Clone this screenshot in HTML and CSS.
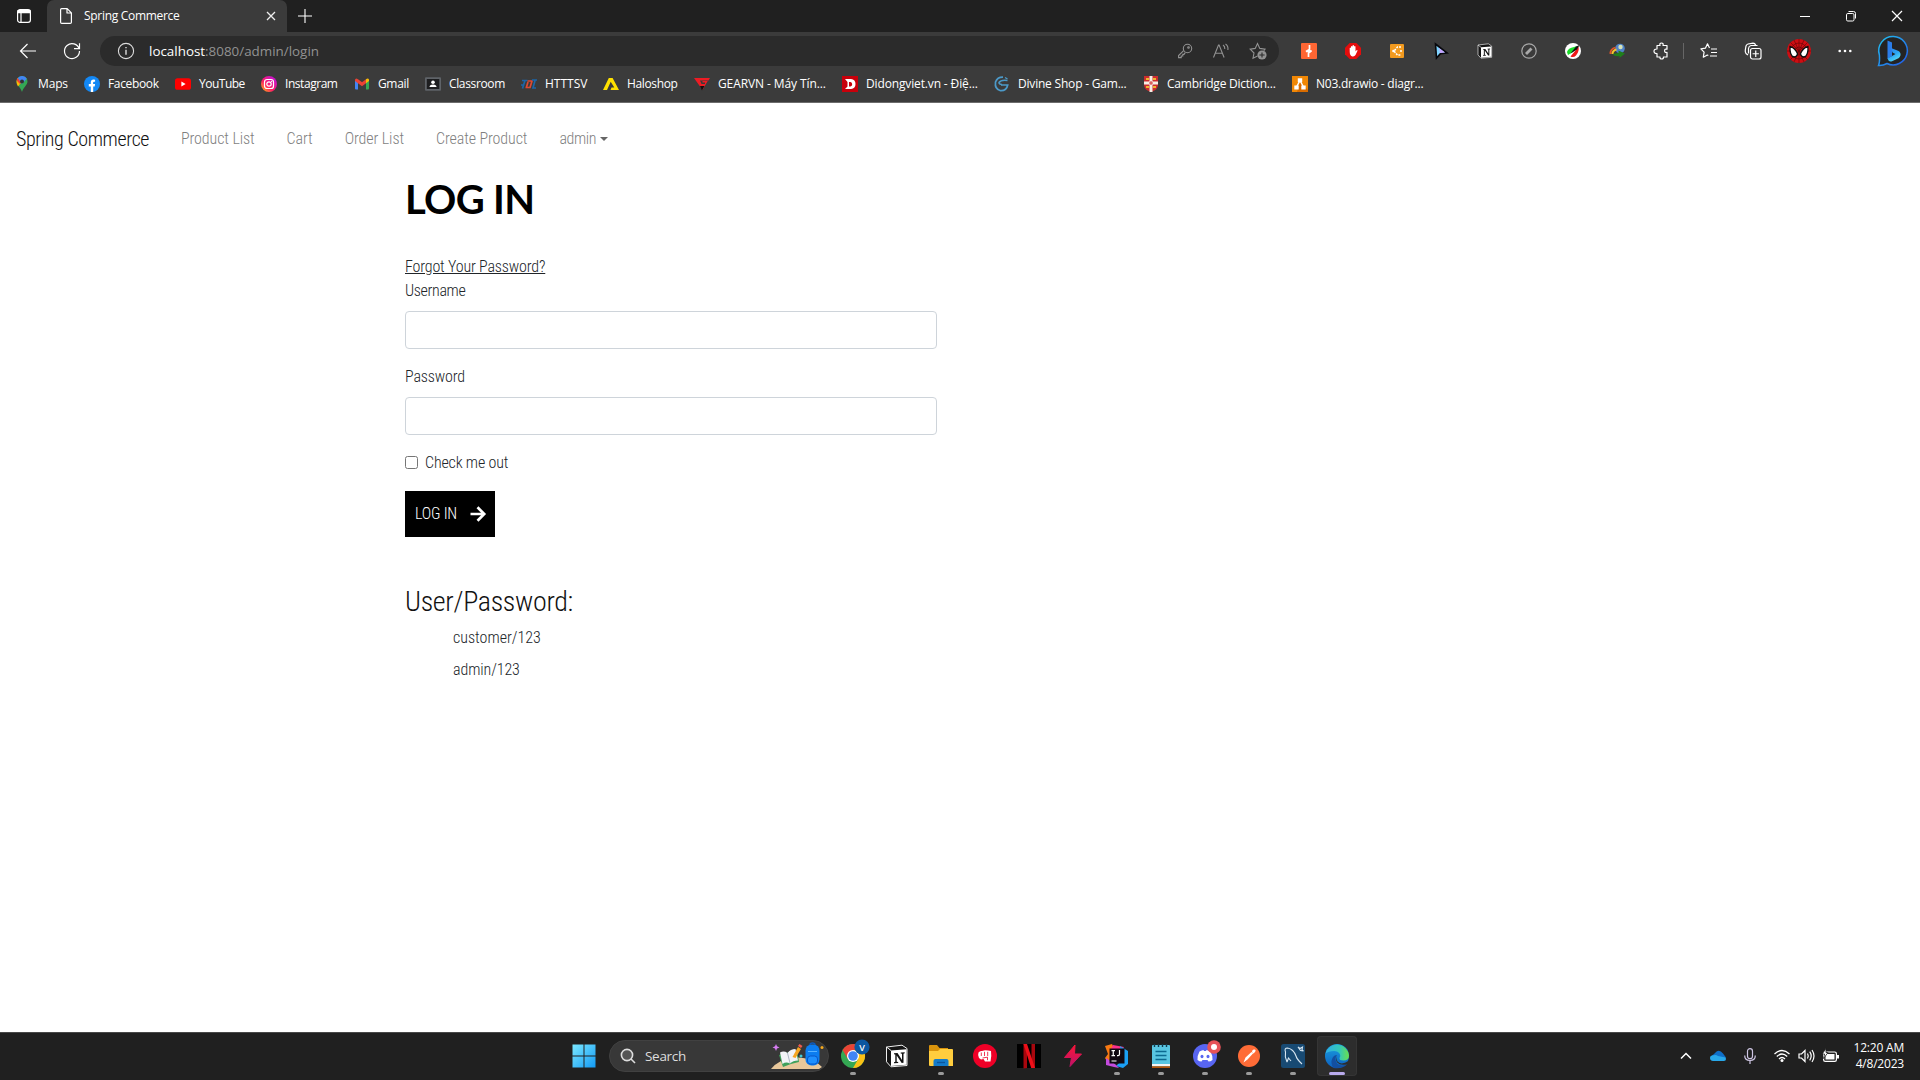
FILE: index.html
```
<!DOCTYPE html>
<html lang="en">
<head>
<meta charset="utf-8">
<title>Spring Commerce</title>
<link rel="stylesheet" href="styles.css">
</head>
<body>
<div class="screen">
<header class="browser">
  <div class="tabbar">
    <div class="tab-menu"><svg width="16" height="16" viewBox="0 0 16 16" fill="none" stroke="#fff" stroke-width="1.2"><rect x="1.6" y="1.6" width="12.8" height="12.8" rx="2.4"/><path d="M2 2.6h12v2H2z" fill="#fff"/><path d="M5 5v9"/></svg></div>
    <div class="tab">
      <svg width="14" height="18" viewBox="0 0 14 18" fill="none" stroke="#fff" stroke-width="1.2" stroke-linejoin="round"><path d="M2.6 1.6h5.6l4.2 4.2v9.4q0 1.2-1.2 1.2H2.8q-1.2 0-1.2-1.2V2.8q0-1.2 1-1.2zM8 1.8V6h4.2"/></svg>
      <span class="tab-title">Spring Commerce</span>
      <svg width="10" height="10" viewBox="0 0 10 10" stroke="#eee" stroke-width="1.3"><path d="M1 1l8 8M9 1L1 9"/></svg>
    </div>
    <svg class="new-tab" width="16" height="16" viewBox="0 0 16 16" stroke="#fff" stroke-width="1.1"><path d="M8 1v14M1 8h14"/></svg>
    <div class="window-controls">
      <span><svg width="12" height="12" viewBox="0 0 12 12" stroke="#fff"><path d="M1 6.5h10"/></svg></span>
      <span><svg width="12" height="12" viewBox="0 0 12 12" stroke="#fff" fill="none"><rect x="1.5" y="3.5" width="7.5" height="7.5" rx="1.3"/><path d="M3.5 1.5h5q2 0 2 2v5"/></svg></span>
      <span><svg width="12" height="12" viewBox="0 0 12 12" stroke="#fff" stroke-width="1.2"><path d="M1 1l10 10M11 1L1 11"/></svg></span>
    </div>
  </div>
  <div class="toolbar">
    <svg class="back" width="18" height="16" viewBox="0 0 18 16" fill="none" stroke="#fff" stroke-width="1.2"><path d="M17 8H1.5M8.5 1L1.5 8l7 7"/></svg>
    <svg class="reload" width="18" height="18" viewBox="0 0 18 18" fill="none" stroke="#fff" stroke-width="1.2"><path d="M16.2 7A7.5 7.5 0 1 0 16.5 9M16.5 1.2v5.5H11"/></svg>
    <div class="address">
      <svg width="18" height="18" viewBox="0 0 18 18" fill="none" stroke="#ddd" stroke-width="1.1"><circle cx="9" cy="9" r="7.6"/><path d="M9 7.8v5M9 4.9v1.4" stroke-width="1.4"/></svg>
      <span class="url"><b>localhost</b>:8080/admin/login</span>
      <div class="address-actions">
        <svg width="16" height="16" viewBox="0 0 16 16" fill="none" stroke="#929292" stroke-width="1.1"><circle cx="10.5" cy="5.5" r="4.2"/><circle cx="11.5" cy="4.5" r=".8"/><path d="M6.6 7.6L1.6 12.6v2h2.6v-1.6h1.6v-1.6h1.2l1.2-1.8"/></svg>
        <svg width="18" height="16" viewBox="0 0 18 16" fill="none" stroke="#929292" stroke-width="1.1"><path d="M1.5 14.5L6.5 2h.6l5 12.5M3.3 10.2h7M11 2q2 1.2 1.8 4M13.5 1q3 2 2.4 6"/></svg>
        <svg width="18" height="18" viewBox="0 0 18 18" fill="none" stroke="#929292" stroke-width="1.1"><path d="M8.5 14L4 16.2 5 11 1.2 7.2l5-.8L8.5 1.6l2.3 4.8 5.2.8-1.2 1.4"/><circle cx="13" cy="13" r="4.6" fill="#929292" stroke="none"/><path d="M13 10.4v5.2M10.4 13h5.2" stroke="#2b2b2b"/></svg>
      </div>
    </div>
    <div class="extensions">
      <span><svg width="16" height="16" viewBox="0 0 16 16"><rect width="16" height="16" rx="1" fill="#ff6633"/><path d="M8.500 2v4.500L5 8.500l5.500-.7L7.500 10v4" fill="none" stroke="#fff" stroke-width="1.700" stroke-linejoin="bevel"/></svg></span>
      <span><svg width="16" height="16" viewBox="0 0 16 16"><path d="M4.700 0h6.600L16 4.700v6.600L11.300 16H4.700L0 11.300V4.700z" fill="#e40d0d"/><path d="M4.700 8.500V5q.7-1 1.300 0V3.400q.8-1 1.500 0v-.8q.8-1 1.500 0v1q.8-1 1.500 0v5l1-1.400q1-.5 1 .5L10.500 12q-1 1.700-3 1.400-2.800-.4-2.800-4.900z" fill="#fff"/></svg></span>
      <span><svg width="14" height="14" viewBox="0 0 14 14"><rect width="14" height="14" rx="1" fill="#f29a1f"/><path d="M11 3H7.500L4 7l3.500 4H11" fill="none" stroke="#fff" stroke-width="1.500" stroke-dasharray="2 1"/><circle cx="3.500" cy="7" r="1.300" fill="#fff"/><circle cx="11" cy="7" r="1" fill="#fff"/></svg></span>
      <span><svg width="14" height="16" viewBox="0 0 14 16"><path d="M1.500 1l11.500 9-6.500.6L2.500 15z" fill="#80d5ff" stroke="#08080c" stroke-width="1.600"/><path d="M5 5l6 4.600-5 .4z" fill="#c7a4ff"/></svg></span>
      <span><svg width="16" height="16" viewBox="0 0 24 24"><use href="#notion"/></svg></span>
      <span><svg width="16" height="16" viewBox="0 0 16 16" fill="none" stroke="#aaa" stroke-width="1.200"><circle cx="8" cy="8" r="7.200"/><path d="M5 11l5.500-5.500" stroke-width="2.800"/></svg></span>
      <span><svg width="16" height="16" viewBox="0 0 16 16"><circle cx="8" cy="8" r="8" fill="#fff"/><path d="M2 9q1-4 7-5l3-1-4 6-5 3z" fill="#1bdc2a"/><path d="M5.500 13.500l5-6 3-4q1 5-2.500 9-2.500 2.500-5.500 1z" fill="#f01818"/><path d="M5.500 10.500l5.500-7L14.500 2l-2.500 4.500z" fill="#111"/></svg></span>
      <span><svg width="16" height="16" viewBox="0 0 16 16"><circle cx="11" cy="5.500" r="4.800" fill="#4f83c8"/><circle cx="11.500" cy="4" r="2.200" fill="#d6e4b8"/><path d="M1.500 11q-.5-5 5-6.500" stroke="#e2552a" stroke-width="1.800" fill="none"/><path d="M3.500 11q0-3.500 4-4.500" stroke="#f3c52c" stroke-width="2" fill="none"/><path d="M3.500 11l6-1V7.500l6.500 3-5.500 4.500v-2q-5 .8-7-2z" fill="#1f7f1b"/></svg></span>
      <span><svg width="16" height="18" viewBox="0 0 16 18" fill="none" stroke="#fff" stroke-width="1.200" stroke-linejoin="round"><path d="M4 3.500h3q-.7-2.500 1.500-2.500T10 3.500h4v3.700q-2.400-.5-2.400 1.600t2.400 1.600V15h-3.600q.3 2-1.700 2t-1.700-2H4v-3.500q-3 .2-3-2.200T4 7z"/></svg></span>
    </div>
    <i class="divider"></i>
    <div class="tools">
      <span><svg width="18" height="18" viewBox="0 0 18 18" fill="none" stroke="#fff" stroke-width="1.200" stroke-linejoin="round"><path d="M9.500 6L7.500 1.800 5.400 6.200l-4.500.7 3.200 3.300-.8 5 4-2.200 1 .5M11 7h6M11 10.500h6M10 14h7"/></svg></span>
      <span><svg width="18" height="18" viewBox="0 0 18 18" fill="none" stroke="#fff" stroke-width="1.200"><path d="M4 13L2 11.500Q1 10 1.300 8L2 4Q2.500 2.500 4 2l5-.8q2 0 2.700 2"/><path d="M4.500 11.500V6.500q.2-2.500 2.500-3h6.500"/><rect x="6.500" y="6.500" width="10.500" height="10.500" rx="2" fill="#3b3b3b"/><path d="M11.750 8.600v6.300M8.600 11.750h6.300"/></svg></span>
      <span class="avatar"><svg width="24" height="24" viewBox="0 0 24 24"><circle cx="12" cy="12" r="12" fill="#cf0d12"/><g fill="none" stroke="#5e0609" stroke-width=".6"><path d="M12 0v24M0 12h24M3.500 3.500l17 17M20.500 3.500l-17 17M7 1l10 22M17 1L7 23"/><circle cx="12" cy="12" r="4"/><circle cx="12" cy="12" r="8"/></g><path d="M3 7.500q5 1 7.600 7.500-1 3-3.600 3-4.500-1-4-10.500zM21 7.500q-5 1-7.600 7.500 1 3 3.600 3 4.500-1 4-10.500z" fill="#fff" stroke="#111" stroke-width="1.300"/></svg></span>
      <span><svg width="14" height="4" viewBox="0 0 14 4" fill="#fff"><circle cx="1.700" cy="2" r="1.300"/><circle cx="7" cy="2" r="1.300"/><circle cx="12.300" cy="2" r="1.300"/></svg></span>
      <span><svg width="32" height="32" viewBox="0 0 32 32"><defs><linearGradient id="ring" x1="0" y1="0" x2="1" y2="1"><stop offset="0" stop-color="#23c2ef"/><stop offset="1" stop-color="#2257e7"/></linearGradient><linearGradient id="bee" x1="0" y1="0" x2=".6" y2="1"><stop offset="0" stop-color="#2f7dea"/><stop offset=".55" stop-color="#2aa4f4"/><stop offset="1" stop-color="#56dcf5"/></linearGradient></defs><path d="M16.500 1.500a14.200 14.200 0 1 1-6.500 27Q6 30.800 1.500 30.500 3 27 2.400 20A14.200 14.200 0 0 1 16.500 1.500z" fill="#242424" stroke="url(#ring)" stroke-width="1.500"/><path d="M10.500 5.500l4.500 2v13.500l-4.500 3z" fill="#2b7de9"/><path d="M10.500 23.500l4.500-2.500 3.500-2-3-1.500-1.500-4.500 7 2.700q3 1.500 2.500 4.500-.5 2-2 3l-6.500 3q-3.500 1-4.500-2.700z" fill="url(#bee)"/></svg></span>
    </div>
  </div>
  <nav class="bookmarks">
    <a class="bm-maps"><svg width="16" height="16" viewBox="0 0 16 16"><path d="M8 0a5.500 5.500 0 0 0-5.500 5.500C2.500 9 6.500 11 8 16c1.500-5 5.500-7 5.500-10.500A5.500 5.500 0 0 0 8 0z" fill="#34a853"/><path d="M3.800 2L8 5.500l-4 5Q2.500 8.500 2.500 5.500 2.600 3.500 3.800 2z" fill="#fbbc04"/><path d="M3.800 2.100L8 5.500 6 8 2.600 4.500q.3-1.500 1.200-2.400z" fill="#ea4335"/><path d="M3.800 2A5.500 5.500 0 0 1 12.800 2.800L8 8z" fill="#4285f4"/><circle cx="8" cy="5.500" r="2" fill="#333"/></svg><span>Maps</span></a>
    <a class="bm-facebook"><svg width="16" height="16" viewBox="0 0 16 16"><circle cx="8" cy="8" r="8" fill="#1388f5"/><path d="M6.800 16v-5.600h-2V8h2V6.300Q6.900 3.500 9.500 3.500l1.600.2v2h-1q-1 0-1 1V8h2l-.4 2.400H9.200V16z" fill="#fff"/></svg><span>Facebook</span></a>
    <a class="bm-youtube"><svg width="16" height="16" viewBox="0 0 16 16"><rect y="2.300" width="16" height="11.500" rx="2.600" fill="#f00"/><path d="M6.400 5.500l4.200 2.500-4.200 2.500z" fill="#fff"/></svg><span>YouTube</span></a>
    <a class="bm-instagram"><svg width="16" height="16" viewBox="0 0 16 16"><defs><linearGradient id="insta" x1="0" y1="1" x2="1" y2="0"><stop offset="0" stop-color="#ffc60a"/><stop offset=".4" stop-color="#ff1f63"/><stop offset="1" stop-color="#b40cf0"/></linearGradient></defs><circle cx="8" cy="8" r="8" fill="url(#insta)"/><g fill="none" stroke="#fff" stroke-width="1.200"><rect x="3.500" y="3.500" width="9" height="9" rx="2.600"/><circle cx="8" cy="8" r="2.200"/></g><circle cx="10.600" cy="5.400" r=".6" fill="#fff"/></svg><span>Instagram</span></a>
    <a class="bm-gmail"><svg width="16" height="16" viewBox="0 0 16 16"><path d="M1 4h3v9.500H2q-1 0-1-1z" fill="#4285f4"/><path d="M12 4h3v8.500q0 1-1 1h-2z" fill="#34a853"/><path d="M1 5V4q0-1.500 1.500-1.500L4 3.300l4 3 4-3v4L8 10.200 4 7.300z" fill="#ea4335"/><path d="M12 7.300v-4q2-1.600 3 .2v1.500z" fill="#fbbc04"/></svg><span>Gmail</span></a>
    <a class="bm-classroom"><svg width="16" height="16" viewBox="0 0 16 16"><rect y="1.300" width="16" height="13.500" rx="1" fill="#5f6368"/><path d="M1.800 3h12.500v10H1.800z" fill="#1d1e20"/><circle cx="8" cy="6.200" r="1.800" fill="#fff"/><path d="M4.500 11q0-2.500 3.500-2.500t3.500 2.500z" fill="#fff"/></svg><span>Classroom</span></a>
    <a class="bm-httt"><svg width="16" height="16" viewBox="0 0 16 16" fill="none" stroke-width="1.700"><path d="M1 4.500h5.500M4 4.500L1.500 12.500M0 9h3" stroke="#1c66a8"/><path d="M6.500 5h4.500L9 11.500H4.500M7 6l-1.500 5" stroke="#df4a32"/><path d="M11 4h5M14 4.500L12 12h3" stroke="#1c66a8"/></svg><span>HTTTSV</span></a>
    <a class="bm-halo"><svg width="16" height="16" viewBox="0 0 16 16"><path d="M5.800 2h3.800L16 14H7.500l1-2.500h2.800L7.700 5.800 4 14H0z" fill="#ffe100"/></svg><span>Haloshop</span></a>
    <a class="bm-gear"><svg width="16" height="16" viewBox="0 0 16 16"><path d="M0 2h16l-1.500 2.500H6L7.500 8h3.500V6.500H8.500V5h5.200L8.500 14z" fill="#ed1c24"/><path d="M6 10h4.500L8 14.500z" fill="#111"/></svg><span>GEARVN - Máy Tín...</span></a>
    <a class="bm-didong"><svg width="16" height="16" viewBox="0 0 16 16"><rect width="16" height="16" fill="#c8000b"/><path d="M3 3h6q4.500.5 4.500 5t-4.500 5H3l2.500-2.500V6zM7 6v4.500h1.500q1.700-.3 1.700-2.300T8.500 6z" fill="#fff" fill-rule="evenodd"/></svg><span>Didongviet.vn - Điệ...</span></a>
    <a class="bm-divine"><svg width="16" height="16" viewBox="0 0 16 16" fill="none" stroke="#4c9ac9" stroke-width="1.700"><path d="M9 1.200Q3.500 1 1.500 6q-1 7 5 8.700 6 .3 7.200-5.700H7"/><path d="M13.500 4.500Q7 3.500 5 6.500q0 2 3 2" stroke-width="1.500"/><path d="M11 1.500l2.500 1.500" stroke-width="1.300"/></svg><span>Divine Shop - Gam...</span></a>
    <a class="bm-camb"><svg width="16" height="16" viewBox="0 0 16 16"><path d="M1 0h14v9q0 5-7 7-7-2-7-7z" fill="#cb2c2e"/><path d="M3 2h3v2H3zM10 2h3v2h-3zM3 10h3v2H3zM10 10h3v2h-3z" fill="#efb52d"/><path d="M6.500 0h3v5.500H15v3H9.500V16h-3V8.500H1v-3h5.500z" fill="#f6eee6"/><path d="M8 5v4M6 7h4" stroke="#c33"/></svg><span>Cambridge Diction...</span></a>
    <a class="bm-drawio"><svg width="16" height="16" viewBox="0 0 16 16"><rect width="16" height="16" fill="#f08705"/><path d="M8 6l8 8v2H5z" fill="#d96c00"/><path d="M8 4.500L4.500 11M8 4.500l3.500 6.500" stroke="#fff" stroke-width="1.500"/><path d="M5.800 2.300h4.400v4H5.800zM2.300 9.500h4.400v4H2.300zM9.300 9.500h4.400v4H9.300z" fill="#fff"/></svg><span>N03.drawio - diagr...</span></a>
  </nav>
</header>

<main class="page">
  <nav class="navbar">
    <a class="brand">Spring Commerce</a>
    <a>Product List</a><a>Cart</a><a>Order List</a><a>Create Product</a><a class="dropdown">admin</a>
  </nav>
  <section class="login">
    <h1>LOG IN</h1>
    <a class="forgot">Forgot Your Password?</a>
    <label class="username">Username</label>
    <input type="text">
    <label>Password</label>
    <input type="password">
    <div class="check"><i></i><span>Check me out</span></div>
    <button>LOG IN<svg width="16" height="16" viewBox="0 0 16 16" fill="none" stroke="#fff" stroke-width="2.700"><path d="M.5 8h13.500M7.500 1.300L14.200 8l-6.700 6.700"/></svg></button>
    <h3>User/Password:</h3>
    <ul><li>customer/123</li><li>admin/123</li></ul>
  </section>
</main>

<footer class="taskbar">
  <div class="start"><svg width="24" height="24" viewBox="0 0 24 24"><defs><linearGradient id="win" x1="0" y1="0" x2="1" y2="1"><stop offset="0" stop-color="#7be8ff"/><stop offset="1" stop-color="#129af5"/></linearGradient></defs><path d="M.5.500h11v11H.5zM12.500.5h11v11h-11zM.5 12.500h11v11H.5zM12.500 12.500h11v11h-11z" fill="url(#win)"/></svg></div>
  <div class="search">
    <svg width="16" height="16" viewBox="0 0 16 16" fill="#555" stroke="#ddd" stroke-width="1.600"><circle cx="7" cy="7" r="5.600"/><path d="M11 11l4 4"/></svg>
    <span>Search</span>
    <svg class="doodle" width="54" height="28" viewBox="0 0 54 28"><path d="M1 27q4-5 10-8l12-4 10 1q12 1 19 9l-3 2z" fill="#e8c79a"/><path d="M9 13l3-1 15-4 2 12-8 2-8 3z" fill="#3fa05c"/><path d="M10 10.500q4-2 7.500.5 3-4 8-4l2.500 11.500q-5 0-8 3-4-2-7.500.5z" fill="#f2f4f8"/><path d="M17.500 11l2.500 10" stroke="#aeb7c6" fill="none"/><path d="M22.500 15l5.500-10 3 2-5.500 9z" fill="#f6a623"/><path d="M28 4l1.500-2 3 2-1.500 2z" fill="#ef5a4c"/><rect x="35.500" y="2.500" width="14" height="21" rx="6" fill="#0c7df0"/><path d="M40 3q0-2 2.500-2T45 3" fill="none" stroke="#0c5cc0" stroke-width="1.500"/><rect x="37.500" y="14" width="10" height="8" rx="3" fill="#1e90ff" stroke="#0756c9"/><path d="M38 9.500h9" stroke="#57b2ff"/><path d="M6 2l1 2.300L9.500 5.500 7 6.500 6 9 5 6.500 2.500 5.500 5 4.300z" fill="#d77df2"/><circle cx="52" cy="5.500" r="1.500" fill="#f5a91c"/><circle cx="31" cy="14" r="1.500" fill="#41c8d6"/></svg>
  </div>
  <div class="apps">
    <span class="run"><svg width="32" height="32" viewBox="0 0 32 32"><circle cx="16" cy="16" r="12" fill="#34a853"/><path d="M5.600 10A12 12 0 0 1 26.400 10L16 16z" fill="#ea4335"/><path d="M16 10h10.400A12 12 0 0 1 16 28l5.200-9z" fill="#fbc116"/><path d="M5.600 10l5.200 9L16 10z" fill="#ea4335"/><circle cx="16" cy="16" r="6" fill="#fff"/><circle cx="16" cy="16" r="4.800" fill="#4285f4"/><circle cx="25" cy="7" r="7.600" fill="#0b57a0"/><text x="25" y="10.500" text-anchor="middle" class="badge">V</text></svg></span>
    <span><svg width="24" height="24" viewBox="0 0 24 24"><g id="notion"><path d="M1.500 3L17 1.200l5 3.300v17L6 22.800l-4.500-5z" fill="#151515" stroke="#eee" stroke-width="1"/><path d="M6 6.500l15.500-1.300v15.500L6 22z" fill="#fff"/><path d="M1.500 3L6 6.500" stroke="#eee"/><path d="M9 9.200l3.500-.3 4.500 7V9.800l-1.300-.3v-1l4-.3v1l-1.200.5v9l-1.800.2-5-7.500v6.300l1.500.3v1l-4.200.3v-1l1.300-.5v-7.300L9 10.200z" fill="#111"/></g></svg></span>
    <span class="run"><svg width="26" height="24" viewBox="0 0 26 24"><path d="M1 2q0-1 1-1h7l2.500 3H20v6H1z" fill="#d9930c"/><path d="M1 7h9l2-2h12q1 0 1 1v16H2q-1 0-1-1z" fill="#ffcd3e"/><path d="M5.500 22v-5q0-2 2-2h11q2 0 2 2v5z" fill="#147bc9"/><path d="M9 18.500h8" stroke="#0b559b" stroke-width="1.300"/></svg></span>
    <span><svg width="24" height="24" viewBox="0 0 24 24"><circle cx="12" cy="12" r="12" fill="#ef0027"/><path d="M5.500 8.500Q7 6.500 9 7l3-.8 3 .3 3 .5q.8 5-.5 10.500H12L10.500 15l-2.500.5-2-1.500q-1.500-3-.5-5.500z" fill="#fff"/><path d="M8.300 8.500V12M11.500 7.800V12M14.700 7.800V12M9.500 14l5-.8v3" stroke="#ef0027" stroke-width=".8" fill="none"/></svg></span>
    <span><svg width="24" height="24" viewBox="0 0 24 24"><path d="M0 0h24v24H0z"/><path d="M6.500 0H10v24l-3.500.5zM14.500 0H18v24h-3.500z" fill="#a8070e"/><path d="M6.500 0H10l8 24h-3.800z" fill="#ee1019"/></svg></span>
    <span><svg width="20" height="24" viewBox="0 0 20 24"><defs><linearGradient id="bolt" x1="0" y1="0" x2="0" y2="1"><stop offset="0" stop-color="#fc1539"/><stop offset="1" stop-color="#bd1268"/></linearGradient></defs><path d="M12 1L1.500 13.500h7L7 22.500 18.500 10h-7z" fill="url(#bolt)" stroke="url(#bolt)" stroke-linejoin="round"/></svg></span>
    <span class="run"><svg width="26" height="26" viewBox="0 0 26 26"><path d="M1 3l7-2 3 6-7 13-3-5 3-4z" fill="#f97a12"/><path d="M9 2l11 2-3 5-10-3z" fill="#fc318c"/><path d="M16 3l8 5v13l-5 4-7-2 6-6z" fill="#1b9ff5"/><path d="M2 15l9 6 4 4-5-1-8-2z" fill="#c44bdd"/><path d="M5.500 5.500h15v15h-15z" fill="#100812"/><path d="M7.500 7.700h3.500M9.250 8v4.500M7.500 12.700h3.500M15.500 7v4q0 1.700-1.500 1.700h-1M7.500 18h5" stroke="#fff" stroke-width="1.200" fill="none"/></svg></span>
    <span class="run"><svg width="20" height="24" viewBox="0 0 20 24"><rect x="1" y="1" width="18" height="22.500" rx="1" fill="#59c6e2"/><path d="M1 20h18v2.200H1z" fill="#f4f4f4"/><path d="M1 22.200h18V24H1z" fill="#b3560c"/><path d="M3.500 0v3M7.500 0v3M11.500 0v3M15.500 0v3" stroke="#123c50" stroke-width="1.400"/><path d="M4.500 7.500h11M4.500 11.500h11M4.500 15.500h11" stroke="#0c6a91" stroke-width="1.700" /></svg></span>
    <span class="run"><svg width="32" height="32" viewBox="0 0 32 32"><circle cx="16" cy="16" r="12" fill="#5865f2"/><path d="M10.500 11.500q2.500-1.500 4-1.500l.5 1h2l.5-1q1.500 0 4 1.500 2.300 4 2 8.500-2 1.500-4 1.500l-1-1.500h-5l-1 1.500q-2 0-4-1.500-.300-4.500 2-8.500z" fill="#fff"/><ellipse cx="13" cy="16.500" rx="1.500" ry="1.700" fill="#5865f2"/><ellipse cx="19" cy="16.500" rx="1.500" ry="1.700" fill="#5865f2"/><circle cx="25" cy="7" r="6.800" fill="#e75358"/><circle cx="25" cy="7" r="3" fill="#fff"/></svg></span>
    <span class="run"><svg width="24" height="24" viewBox="0 0 24 24"><circle cx="12" cy="12" r="11" fill="#ff6c37"/><path d="M6.500 18.500l2-5 6-5.500 1.500 1.500-5.500 6zM15 7.500q.5-2.500 2.500-2t.5 2.500-2.300 1.200z" fill="#fff"/></svg></span>
    <span class="run"><svg width="24" height="24" viewBox="0 0 24 24"><rect width="24" height="24" rx="2.500" fill="#184a73"/><path d="M6 18Q3.500 13 4.500 8q-1.500-4 2-4 6 1 8.500 8 1 3.500 6 8M6 18l1.500-4 2.500 3M17 3l2 1.500L21.500 3l-.5 3 1.500 1-3-.5z" fill="none" stroke="#d8e7f2" stroke-width="1.100"/></svg></span>
    <span class="run active"><svg width="24" height="24" viewBox="0 0 24 24"><defs><linearGradient id="edge-top"><stop offset="0" stop-color="#2faee8"/><stop offset=".6" stop-color="#34c8b8"/><stop offset="1" stop-color="#6be04a"/></linearGradient><linearGradient id="edge-low" x1="0" y1="0" x2="0" y2="1"><stop offset="0" stop-color="#1aa0e0"/><stop offset="1" stop-color="#0d60c0"/></linearGradient></defs><circle cx="12" cy="12" r="12" fill="url(#edge-low)"/><path d="M.5 9.500A12 12 0 0 1 24 11.500q0 5-5.500 5-4.500 0-4-2.500 1.500-2 .3-4Q13 7 9 7 3.500 7 .5 9.500z" fill="url(#edge-top)"/><path d="M8.500 24Q5 19 7.500 14 9 11 12 11q-3 4 0 8.500 3.500 3.500 10.500.500Q17 25.500 8.500 24z" fill="#134fa0"/><path d="M12.500 11.500q-2 2.500 0 6 4 4 11-.500l.5 1-2.500 2.200q-6 2-9.500-2-2-3.500.5-6.700z" fill="#2d2d2d"/></svg></span>
  </div>
  <div class="tray">
    <span><svg width="12" height="8" viewBox="0 0 12 8" fill="none" stroke="#fff" stroke-width="1.500"><path d="M1 6.500l5-5 5 5"/></svg></span>
    <span><svg width="16" height="12" viewBox="0 0 16 12"><path d="M3 10Q1 8 2 5.500 4 4 5 3q4-4.500 8 .5l3 4-4 3z" fill="#0f6fc9"/><path d="M3 11q-3-.5-3-3t3.500-2.700Q6 4.500 8 6l5 1q3 0 3 2t-2 2z" fill="#28a8ea"/></svg></span>
    <span><svg width="12" height="16" viewBox="0 0 12 16" fill="none" stroke="#cfc6e4" stroke-width="1.200"><rect x="3.500" y=".700" width="5" height="10" rx="2.500"/><path d="M.700 7.500q0 5 5.300 5t5.300-5M6 12.500V16"/></svg></span>
    <span class="status">
      <svg width="16" height="14" viewBox="0 0 16 14" fill="none" stroke="#fff" stroke-width="1.300"><path d="M.500 5q7.500-7 15 0M2.800 7.500q5.200-5 10.400 0M5 10q3-3 6 0"/><circle cx="8" cy="11.500" r="1.500" fill="#fff" stroke="none"/></svg>
      <svg width="17" height="14" viewBox="0 0 17 14" fill="none" stroke="#fff" stroke-width="1.200"><path d="M1 5h2.500L7 1.500v11L3.500 9H1zM9.500 4.500q1.500 2.500 0 5M11.700 2.700q3 4.300 0 8.600M14 1q4 6 0 12"/></svg>
      <svg width="17" height="14" viewBox="0 0 17 14"><rect x="1.600" y="3" width="12.800" height="9.400" rx="1.700" fill="none" stroke="#fff" stroke-width="1.200"/><path d="M3.500 5h9v5.500h-9zM15 6h2v3.500h-2z" fill="#fff"/><path d="M4-.5L.2 5H2.500L1.500 9.500l4.500-6H4z" fill="#fff" stroke="#202020" stroke-width=".8"/></svg>
    </span>
    <div class="clock"><div>12:20 AM</div><div>4/8/2023</div></div>
  </div>
</footer>
</div>
</body>
</html>
```

FILE: styles.css
```
* { box-sizing: border-box; }
body { margin: 0; background: #fff; overflow: hidden; }
svg { display: block; flex: none; overflow: visible; }
.screen { width: 1920px; height: 1080px; display: flex; flex-direction: column; }

/* browser chrome */
.browser { height: 103px; background: #3b3b3b; border-bottom: 1px solid #6c6c6c; color: #fff; font: 12px/16px "Open Sans", sans-serif; white-space: nowrap; }
.tabbar { height: 32px; background: #202020; display: flex; align-items: center; }
.tab-menu { width: 47px; padding-left: 16px; }
.tab { width: 240px; height: 32px; background: #3b3b3b; border-radius: 7px 7px 0 0; display: flex; align-items: center; padding: 0 11px 0 12px; }
.tab-title { flex: 1; margin-left: 11px; letter-spacing: -.3px; }
.new-tab { margin-left: 10px; }
.window-controls { margin-left: auto; display: flex; }
.window-controls span { width: 46px; display: flex; justify-content: center; }
.toolbar { height: 38px; display: flex; align-items: center; }
.back { margin-left: 19px; }
.reload { margin-left: 26px; margin-right: 19px; }
.address { width: 1179px; height: 30px; border-radius: 15px; background: #2b2b2b; display: flex; align-items: center; padding: 0 12px 0 17px; }
.url { margin-left: 14px; font-size: 13.4px; color: #929292; }
.url b { font-weight: 400; color: #fff; }
.address-actions { margin-left: auto; display: flex; align-items: center; gap: 19px; }
.extensions { margin-left: 8px; display: flex; }
.extensions span { width: 44px; height: 24px; display: flex; align-items: center; justify-content: center; }
.divider { width: 1px; height: 16px; margin: 0 3px 0 0; background: #666; }
.tools { display: flex; }
.tools span { width: 44px; height: 32px; display: flex; align-items: center; justify-content: center; }
.tools span.avatar { width: 48px; }
.tools span:last-child { width: 52px; }
.bookmarks { display: flex; align-items: center; height: 28px; gap: 16px; padding-left: 14px; }
.bookmarks a { display: flex; align-items: center; gap: 8px; }
.bm-maps span { width: 30px; letter-spacing: -.15px; }
.bm-facebook span { width: 51px; letter-spacing: -.35px; }
.bm-youtube span { width: 46px; letter-spacing: -.5px; }
.bm-instagram span { width: 53px; letter-spacing: -.45px; }
.bm-gmail span { width: 31px; letter-spacing: -.35px; }
.bm-classroom span { width: 56px; letter-spacing: -.36px; }
.bm-httt span { width: 42px; }
.bm-halo span { width: 51px; letter-spacing: -.35px; }
.bm-gear span { width: 108px; letter-spacing: -.1px; }
.bm-didong span { width: 112px; letter-spacing: -.14px; }
.bm-divine span { width: 109px; letter-spacing: -.2px; }
.bm-camb span { width: 109px; letter-spacing: -.23px; }
.bm-drawio span { width: 108px; letter-spacing: -.24px; }

/* page */
.page { flex: 1; background: #fff; color: #212529; font: 300 16px/24px Roboto, sans-serif; font-stretch: 75%; }
.navbar { height: 72px; display: flex; align-items: center; gap: 32px; padding-left: 16px; color: #7f7f7f; letter-spacing: -.1px; }
.brand { width: 133px; font-size: 20px; color: #111; letter-spacing: -.4px; white-space: nowrap; }
.dropdown { display: flex; align-items: center; gap: 4px; letter-spacing: -.4px; }
.dropdown::after { content: ""; border: 4.5px solid transparent; border-top-color: #666; border-bottom: 0; }
.login { width: 532px; margin-left: 405px; display: flex; flex-direction: column; align-items: flex-start; }
h1 { margin: 0 0 32px; font: 700 40px/48px Lato, sans-serif; letter-spacing: -.7px; color: #000; }
.forgot { color: #212529; text-decoration: underline; text-underline-offset: 1px; letter-spacing: -.16px; }
label { letter-spacing: -.15px; }
.username { letter-spacing: -.35px; }
input { width: 532px; height: 38px; margin: 8px 0 16px; border: 1px solid #ced4da; border-radius: 4px; background: #fff; }
.check { display: flex; align-items: center; gap: 7px; letter-spacing: -.17px; }
.check i { width: 13px; height: 13px; margin-bottom: 2px; border: 1px solid #767676; border-radius: 2.5px; }
button { width: 90px; height: 46px; margin: 16px 0 48px; padding: 0 9px 1px 10px; border: 0; background: #000; color: #fff; font: inherit; letter-spacing: -.2px; display: flex; align-items: center; justify-content: space-between; }
h3 { margin: 0 0 7px; font-size: 28px; line-height: 33.6px; font-weight: 300; color: #111; letter-spacing: -.32px; }
ul { margin: 0; padding: 0 0 0 48px; list-style: none; display: grid; gap: 8px; }
li + li { letter-spacing: -.1px; }

/* taskbar */
.taskbar { height: 48px; padding-bottom: 1px; background: #202020; border-top: 1px solid #484848; color: #fff; display: flex; align-items: center; font: 12px/16px "Open Sans", sans-serif; }
.start { width: 37px; margin-left: 572px; }
.search { width: 219.5px; height: 32px; border-radius: 16px; background: #383838; border: 1px solid #414141; display: flex; align-items: center; padding: 0 4px 0 10px; margin-right: 4.5px; font-size: 13.5px; letter-spacing: -.3px; color: #ddd; }
.search span { margin-left: 9px; }
.doodle { margin-left: auto; }
.apps { display: flex; }
.apps span { width: 40px; height: 40px; margin-right: 4px; border-radius: 4px; display: flex; align-items: center; justify-content: center; position: relative; }
.run::after { content: ""; position: absolute; left: 17px; bottom: 1px; width: 6px; height: 3px; border-radius: 2px; background: #9a9a9a; }
.apps .active { background: #2d2d2d; box-shadow: inset 0 0 0 1px #353535; }
.active::after { left: 12px; width: 16px; background: #b9aaec; }
.badge { font: 600 9px "Open Sans", sans-serif; fill: #fff; }
.tray { margin-left: auto; display: flex; align-items: center; padding-right: 16px; }
.tray span { width: 32px; display: flex; justify-content: center; }
.tray .status { width: 72px; justify-content: flex-start; gap: 7.5px; margin-left: 8px; }
.clock { width: 58px; text-align: right; letter-spacing: -.2px; white-space: nowrap; }
```
